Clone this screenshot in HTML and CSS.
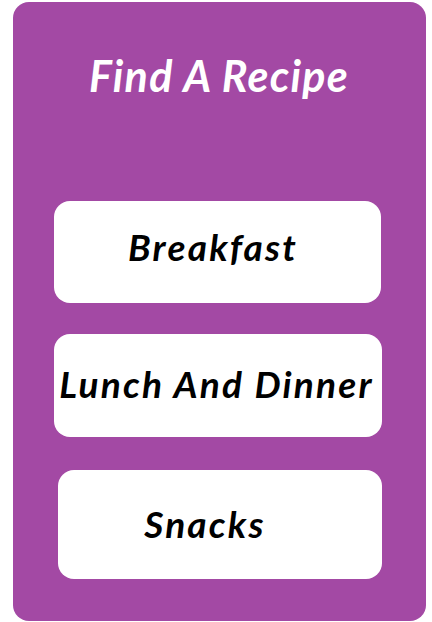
FILE: index.html
```html
<!DOCTYPE html>
<html>
<head>
<meta charset="utf-8">
<link rel="stylesheet" href="styles.css">
</head>
<body>
<div class="card">
  <h1 class="title">Find A Recipe</h1>
  <div class="menu">
    <a class="btn btn-breakfast">Breakfast</a>
    <a class="btn btn-lunch">Lunch And Dinner</a>
    <a class="btn btn-snacks">Snacks</a>
  </div>
</div>
</body>
</html>
```
FILE: styles.css
```css
html, body {
  margin: 0;
  padding: 0;
  background: #ffffff;
}
body {
  font-family: Lato, "Open Sans", sans-serif;
}
.card {
  box-sizing: border-box;
  margin: 2px 0 0 13px;
  width: 413px;
  height: 619px;
  background: #a349a4;
  border-radius: 16px;
  padding-top: 46px;
}
.title {
  margin: 0;
  color: #ffffff;
  font-style: italic;
  font-weight: 700;
  font-size: 43px;
  line-height: 56px;
  letter-spacing: 1.3px;
  text-align: center;
  padding-right: 1px;
}
.menu {
  display: flex;
  flex-direction: column;
  margin-top: 97px;
}
.btn {
  box-sizing: border-box;
  display: flex;
  align-items: center;
  justify-content: center;
  background: #ffffff;
  color: #000000;
  border-radius: 16px;
  font-style: italic;
  font-weight: 700;
  font-size: 37px;
  line-height: 1;
  letter-spacing: 2.2px;
}
.btn-breakfast {
  margin-left: 41px;
  width: 327px;
  height: 102px;
  padding: 0 9px 12px 0;
}
.btn-lunch {
  margin-left: 41px;
  margin-top: 31px;
  width: 328px;
  height: 103px;
  padding: 0 3px 4px 0;
}
.btn-snacks {
  margin-left: 45px;
  margin-top: 33px;
  width: 324px;
  height: 109px;
  padding: 0 30px 2px 0;
}
```
